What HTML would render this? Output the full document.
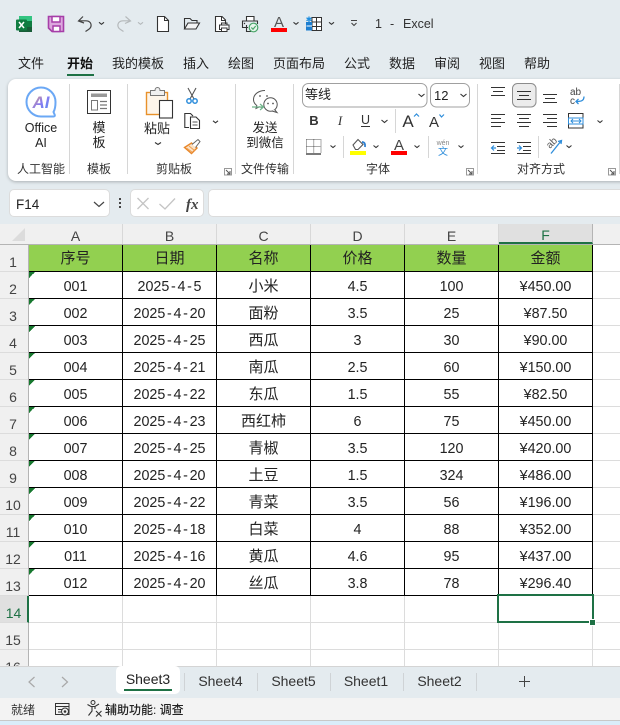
<!DOCTYPE html>
<html lang="zh-CN">
<head>
<meta charset="utf-8">
<title>1 - Excel</title>
<style>
html,body{margin:0;padding:0}
body{width:620px;height:725px;overflow:hidden;position:relative;background:#e4ebef;font-family:"Liberation Sans","Noto Sans CJK SC",sans-serif;color:#222}
#ribbon{position:absolute;left:8px;top:79px;width:640px;height:102px;background:#fff;border-radius:8px;box-shadow:0 1px 3px rgba(0,0,0,.25)}
.box{position:absolute;background:#fff;border:1px solid #dcdcdc;box-sizing:border-box;border-radius:5px}
#sheet{position:absolute;left:0;top:224px;width:620px;height:442px;background:#fff;overflow:hidden}
#colh{position:absolute;left:0;top:0;width:620px;height:21px;background:#f0f0f0;border-bottom:1px solid #b4b4b4;box-sizing:border-box}
.ch{position:absolute;top:0;height:20px;width:93px;border-right:1px solid #d8d8d8;text-align:center;font-size:14px;line-height:24px;color:#444}
#rowh{position:absolute;left:0;top:21px;width:29px;height:421px;background:#f0f0f0;border-right:1px solid #b4b4b4;box-sizing:border-box}
.rh{height:27px;box-sizing:border-box;border-bottom:1px solid #dcdcdc;text-align:center;font-size:14px;line-height:35px;color:#444;padding-right:2px}
.rh.s{background:#e0e0e0;color:#1e7145;border-right:2px solid #1e7145;padding-right:0;width:29px}
table{position:absolute;left:29px;top:21px;border-collapse:separate;border-spacing:0;table-layout:fixed;width:591px}
td{width:94px;height:27px;padding:4px 0 0;box-sizing:border-box;border-right:1px solid #000;border-bottom:1px solid #000;text-align:center;font-size:14.3px;line-height:22px;color:#222;white-space:nowrap}
td:nth-child(3){font-size:15px}
td.x{width:27px;border-right:0;border-bottom:1px solid #dcdcdc}
tr.h td{background:#92d050;font-size:15px;padding:2px 0 0;line-height:24px}
tr.h td.x{background:#fff}
tr.e td{border-right:1px solid #dcdcdc;border-bottom:1px solid #dcdcdc}
tr.e td.x{border-right:0}
td.t{background:linear-gradient(135deg,#17782f 50%,transparent 50%) 0 0/6px 6px no-repeat}
td i{font-style:normal;padding:0 1.7px}
#sel{position:absolute;left:497px;top:370px;width:97px;height:29px;box-sizing:border-box;border:2px solid #1e7145}
#hdl{position:absolute;left:589px;top:395px;background:#1e7145;border:1px solid #fff;width:5px;height:5px}
#tabs{position:absolute;left:0;top:666px;width:620px;height:32px;background:#e4ebef;border-top:1px solid #d4d4d4;box-sizing:border-box}
#tab3{position:absolute;left:116px;top:666px;width:64px;height:28px;background:#fff;border-radius:5px}
#status{position:absolute;left:0;top:698px;width:620px;height:23px;background:#f3f3f3;border-bottom:1px solid #c8c8c8;box-sizing:border-box}
#strip{position:absolute;left:0;top:721px;width:620px;height:4px;background:#d9edfa}
svg#o{position:absolute;left:0;top:0;width:620px;height:725px}
svg text{font-family:"Liberation Sans","Noto Sans CJK SC",sans-serif;fill:#222}
.m{text-anchor:middle}
.l{font-size:12px;fill:#333}
.r{font-size:12.5px;fill:#222}
.n{font-size:13px;fill:#222}
.tb{font-size:14px;fill:#333;text-anchor:middle}
</style>
</head>
<body>
<div id="ribbon"></div>
<div class="box" style="left:9px;top:189px;width:101px;height:28px"></div>
<div class="box" style="left:130px;top:189px;width:74px;height:28px"></div>
<div class="box" style="left:208px;top:189px;width:420px;height:28px;border-radius:5px 0 0 5px"></div>

<div id="sheet">
  <div id="colh">
    <div class="ch" style="left:29px">A</div>
    <div class="ch" style="left:123px">B</div>
    <div class="ch" style="left:217px">C</div>
    <div class="ch" style="left:311px">D</div>
    <div class="ch" style="left:405px">E</div>
    <div class="ch" style="left:499px;background:#e0e0e0;color:#1e7145;border-bottom:2px solid #1e7145;height:18px;line-height:22px;border-right:1px solid #b4b4b4">F</div>
  </div>
  <div id="rowh">
    <div class="rh">1</div><div class="rh">2</div><div class="rh">3</div><div class="rh">4</div><div class="rh">5</div><div class="rh">6</div><div class="rh">7</div><div class="rh">8</div><div class="rh">9</div><div class="rh">10</div><div class="rh">11</div><div class="rh">12</div><div class="rh">13</div><div class="rh s">14</div><div class="rh">15</div><div class="rh">16</div>
  </div>
  <table>
    <tr class="h"><td>序号</td><td>日期</td><td>名称</td><td>价格</td><td>数量</td><td>金额</td><td class="x"></td></tr>
    <tr><td class="t">001</td><td>2025<i>-</i>4<i>-</i>5</td><td>小米</td><td>4.5</td><td>100</td><td>¥450.00</td><td class="x"></td></tr>
    <tr><td class="t">002</td><td>2025<i>-</i>4<i>-</i>20</td><td>面粉</td><td>3.5</td><td>25</td><td>¥87.50</td><td class="x"></td></tr>
    <tr><td class="t">003</td><td>2025<i>-</i>4<i>-</i>25</td><td>西瓜</td><td>3</td><td>30</td><td>¥90.00</td><td class="x"></td></tr>
    <tr><td class="t">004</td><td>2025<i>-</i>4<i>-</i>21</td><td>南瓜</td><td>2.5</td><td>60</td><td>¥150.00</td><td class="x"></td></tr>
    <tr><td class="t">005</td><td>2025<i>-</i>4<i>-</i>22</td><td>东瓜</td><td>1.5</td><td>55</td><td>¥82.50</td><td class="x"></td></tr>
    <tr><td class="t">006</td><td>2025<i>-</i>4<i>-</i>23</td><td>西红柿</td><td>6</td><td>75</td><td>¥450.00</td><td class="x"></td></tr>
    <tr><td class="t">007</td><td>2025<i>-</i>4<i>-</i>25</td><td>青椒</td><td>3.5</td><td>120</td><td>¥420.00</td><td class="x"></td></tr>
    <tr><td class="t">008</td><td>2025<i>-</i>4<i>-</i>20</td><td>土豆</td><td>1.5</td><td>324</td><td>¥486.00</td><td class="x"></td></tr>
    <tr><td class="t">009</td><td>2025<i>-</i>4<i>-</i>22</td><td>青菜</td><td>3.5</td><td>56</td><td>¥196.00</td><td class="x"></td></tr>
    <tr><td class="t">010</td><td>2025<i>-</i>4<i>-</i>18</td><td>白菜</td><td>4</td><td>88</td><td>¥352.00</td><td class="x"></td></tr>
    <tr><td class="t">011</td><td>2025<i>-</i>4<i>-</i>16</td><td>黄瓜</td><td>4.6</td><td>95</td><td>¥437.00</td><td class="x"></td></tr>
    <tr><td class="t">012</td><td>2025<i>-</i>4<i>-</i>20</td><td>丝瓜</td><td>3.8</td><td>78</td><td>¥296.40</td><td class="x"></td></tr>
    <tr class="e"><td></td><td></td><td></td><td></td><td></td><td></td><td class="x"></td></tr>
    <tr class="e"><td></td><td></td><td></td><td></td><td></td><td></td><td class="x"></td></tr>
    <tr class="e"><td></td><td></td><td></td><td></td><td></td><td></td><td class="x"></td></tr>
  </table>
  <div id="sel"></div>
  <div id="hdl"></div>
</div>

<div id="tabs"></div>
<div id="tab3"></div>
<div id="status"></div>
<div id="strip"></div>

<svg id="o" viewBox="0 0 620 725" xmlns="http://www.w3.org/2000/svg" fill="none">
  <defs>
    <linearGradient id="ai" x1="0" y1="0" x2="1" y2="1">
      <stop offset="0" stop-color="#f0a860"/>
      <stop offset=".5" stop-color="#8a7cf0"/>
      <stop offset="1" stop-color="#4f8ff5"/>
    </linearGradient>
  </defs>
  <!-- title bar: excel logo -->
  <rect x="19" y="16" width="13" height="16" rx="1" fill="#21a366"/>
  <rect x="19" y="16" width="13" height="5" fill="#33c481"/>
  <rect x="25" y="21" width="7" height="6" fill="#107c41"/>
  <rect x="19" y="27" width="13" height="5" fill="#185c37"/>
  <rect x="16" y="19.5" width="11" height="11" rx="1" fill="#107c41"/>
  <path d="M19 22l5 6M24 22l-5 6" stroke="#fff" stroke-width="1.5"/>
  <!-- save -->
  <path d="M48.500 16.500H63.500V31.500H52L48.500 28Z" fill="#dca8de" stroke="#a63ea8" stroke-width="1.600"/>
  <rect x="52" y="16.500" width="8" height="5.500" fill="#fff" stroke="#a63ea8" stroke-width="1.500"/>
  <rect x="53" y="26" width="7" height="5.500" fill="#fff" stroke="#a63ea8" stroke-width="1.500"/>
  <!-- undo -->
  <path d="M83 16.500L78.500 21L84 23M79 20.800H86C92 21 92.500 27 88.500 29.500L85.500 31.500" stroke="#444" stroke-width="1.200"/>
  <path d="M99 22.300L101.500 24.300L104 22.300" stroke="#333" stroke-width="1.100"/>
  <!-- redo -->
  <path d="M125.500 16.500L130.500 21L125 23.500M130 20.800H123C117 21 116.500 27 120.500 29.500L123.500 31.500" stroke="#b5b9bb" stroke-width="1.200"/>
  <path d="M138 22.300L140.500 24.300L143 22.300" stroke="#b5b9bb" stroke-width="1.100"/>
  <!-- new -->
  <path d="M157.500 16.500H164.500L168.500 20.500V31.500H157.500Z" fill="#fff" stroke="#333" stroke-width="1.100"/>
  <path d="M164.500 16.500V20.500H168.500" stroke="#333" stroke-width="1"/>
  <!-- open -->
  <path d="M184.500 29V18.500H190L192 20.500H197V23" stroke="#333" stroke-width="1.100"/>
  <path d="M184.500 29H196L199.500 23H188Z" stroke="#333" stroke-width="1.100" fill="#f4f4f4"/>
  <!-- preview -->
  <path d="M221 31.500H215.500V16.500H222L225.500 20V24" stroke="#333" stroke-width="1.100" fill="#fff"/>
  <path d="M221.500 16.500V20.500H225.500" stroke="#333" stroke-width="1"/>
  <rect x="219.500" y="25" width="9.500" height="4.500" fill="#fff" stroke="#333"/>
  <rect x="221.500" y="23" width="5.500" height="2" stroke="#333"/>
  <rect x="221.500" y="28" width="5.500" height="3.500" fill="#fff" stroke="#333"/>
  <!-- quick print -->
  <path d="M246.500 21V16.500H254V21" stroke="#333" stroke-width="1.100" fill="#fff"/>
  <path d="M248 27.500H242.500V21H257.500V24" stroke="#333" stroke-width="1.100"/>
  <path d="M246.500 25V31.500H251" stroke="#333" stroke-width="1.100"/>
  <circle cx="244.500" cy="23.500" r=".7" fill="#333"/>
  <circle cx="253.500" cy="27.500" r="4.300" fill="#e8f5ec" stroke="#4aa66a" stroke-width="1.200"/>
  <path d="M251.300 27.500L253 29.200L255.700 26" stroke="#4aa66a" stroke-width="1.200"/>
  <!-- font colour -->
  <text x="279" y="27" class="m" style="font-size:15px;fill:#555">A</text>
  <rect x="271" y="28" width="16" height="4" fill="#f00"/>
  <path d="M293.500 22.300L296 24.300L298.500 22.300" stroke="#333" stroke-width="1.100"/>
  <!-- table icon -->
  <rect x="312" y="17.500" width="9.500" height="13" fill="#fff" stroke="#333"/>
  <path d="M312 22H321.500M312 26.500H321.500M316.500 17.500V30.500" stroke="#333"/>
  <rect x="306" y="22" width="6" height="8.500" fill="#1e7fd0"/>
  <path d="M306.500 26H312" stroke="#fff"/>
  <path d="M309 16.500V22M306.500 17.800L311.500 20.700M311.500 17.800L306.500 20.700" stroke="#1e8ee0" stroke-width="1.300"/>
  <path d="M329 22.300L331.500 24.300L334 22.300" stroke="#333" stroke-width="1.100"/>
  <!-- customise -->
  <path d="M351 20.500H357M351.500 23L354 25.500L356.500 23" stroke="#444" stroke-width="1.100"/>
  <text x="375" y="28" style="font-size:12.500px;fill:#333">1</text>
  <text x="390" y="28" style="font-size:12.500px;fill:#333">-</text>
  <text x="403" y="28" style="font-size:12.500px;fill:#333">Excel</text>

  <!-- menu -->
  <text x="18" y="68" class="n">文件</text>
  <text x="67" y="68" class="n" style="font-weight:700;fill:#111">开始</text>
  <text x="112" y="68" class="n">我的模板</text>
  <text x="183" y="68" class="n">插入</text>
  <text x="228" y="68" class="n">绘图</text>
  <text x="273" y="68" class="n">页面布局</text>
  <text x="344" y="68" class="n">公式</text>
  <text x="389" y="68" class="n">数据</text>
  <text x="434" y="68" class="n">审阅</text>
  <text x="479" y="68" class="n">视图</text>
  <text x="524" y="68" class="n">帮助</text>
  <rect x="67" y="74" width="27" height="2" fill="#1e7145"/>

  <!-- separators -->
  <g stroke="#d6d6d6">
    <path d="M69.500 84V174M127.500 84V174M235.500 84V174M293.500 84V174M477.500 84V174M619.500 84V174"/>
    <path d="M395.500 109V133M343.500 136V158M428.500 136V158M538.500 136V158"/>
  </g>

  <!-- group labels -->
  <text x="41" y="173" class="l m">人工智能</text>
  <text x="99" y="173" class="l m">模板</text>
  <text x="174" y="173" class="l m">剪贴板</text>
  <text x="265" y="173" class="l m">文件传输</text>
  <text x="378" y="173" class="l m">字体</text>
  <text x="541" y="173" class="l m">对齐方式</text>
  <g stroke="#555">
    <path d="M224.500 168.500H231.500V175H224.500Z" stroke="#999"/><path d="M226 170L230 174M230 171V174H227"/>
    <path d="M466.500 168.500H473.500V175H466.500Z" stroke="#999"/><path d="M468 170L472 174M472 171V174H469"/>
    <path d="M608.500 168.500H615.500V175H608.500Z" stroke="#999"/><path d="M610 170L614 174M614 171V174H611"/>
  </g>

  <!-- Office AI -->
  <path d="M41 87.500C33 87.500 26.500 94 26.500 102C26.500 110 33 116.500 41 116.500H53.500C54.500 116.500 55 116 54.800 115L53.500 112C55 109.500 55.500 105.500 55.500 102C55.500 94 49 87.500 41 87.500Z" fill="#fff" stroke="#6ba8f5" stroke-width="2"/>
  <text x="41" y="108" class="m" style="font-size:17px;font-weight:700;font-style:italic;fill:url(#ai)">AI</text>
  <text x="41" y="132" class="r m">Office</text>
  <text x="41" y="147" class="r m">AI</text>

  <!-- template -->
  <rect x="87.500" y="90.500" width="23" height="23" stroke="#333" fill="#fff"/>
  <rect x="91" y="93.500" width="16" height="3.500" fill="#999"/>
  <rect x="91.500" y="100.500" width="6" height="9.500" stroke="#777"/>
  <path d="M100 101.500H107M100 105H107M100 108.500H107" stroke="#777" stroke-width="1.200"/>
  <text x="99" y="132" class="r m" style="font-size:13px">模</text>
  <text x="99" y="147" class="r m" style="font-size:13px">板</text>

  <!-- paste -->
  <rect x="146.500" y="92.500" width="21" height="22" fill="#fdf5ea" stroke="#e8912a" stroke-width="1.400"/>
  <path d="M150.500 95.500V90.500H155C155 86.500 160 86.500 160 90.500H164.500V95.500Z" fill="#f0f0f0" stroke="#777"/>
  <rect x="159.500" y="100.500" width="13" height="17.500" fill="#fff" stroke="#333" stroke-width="1.100"/>
  <text x="157" y="133" class="r m" style="font-size:13px">粘贴</text>
  <path d="M155 142.500L158 144.500L161 142.500" stroke="#333" stroke-width="1.100"/>

  <!-- cut -->
  <path d="M188 88L194 99M196 88L190 99" stroke="#555" stroke-width="1.100"/>
  <circle cx="189" cy="101" r="2.200" fill="#fff" stroke="#2f8edb" stroke-width="1.500"/>
  <circle cx="195" cy="101" r="2.200" fill="#fff" stroke="#2f8edb" stroke-width="1.500"/>

  <!-- copy -->
  <path d="M189 127.500H184.800V113.500H190.500L193 116" stroke="#333" stroke-width="1.100"/>
  <path d="M190.500 117H196L199.500 120.500V128.500H190.500Z" stroke="#333" stroke-width="1.100" fill="#fff"/>
  <path d="M192.500 122H197.500M192.500 125H197.500" stroke="#555"/>
  <path d="M213 120.800L215.500 122.800L218 120.800" stroke="#333" stroke-width="1.100"/>

  <!-- format painter -->
  <path d="M184.500 147.500L191.500 143L197 148L191.500 153.500Z" fill="#fbe3c8" stroke="#e8872a" stroke-width="1.400"/>
  <path d="M186.500 148L192 152M189 146L194.500 150.500" stroke="#f0a050"/>
  <path d="M192 144.500L198 139.500L200 141.500L195.500 147.500" fill="#fff" stroke="#666"/>

  <!-- wechat -->
  <path d="M265 90.500C259 90.500 253.500 94 253.500 99.500C253.500 102 254.800 104 256.800 105.500L256 108.500L259.500 106.800L262 107.500" stroke="#555" fill="#fff"/>
  <circle cx="270.500" cy="104.500" r="6.700" fill="#fff" stroke="#555"/>
  <path d="M274.500 109.500L277 112.500L272 111" stroke="#555" fill="#fff"/>
  <circle cx="260" cy="96" r=".9" fill="#555"/><circle cx="267" cy="96" r=".9" fill="#555"/>
  <circle cx="268" cy="103.500" r=".9" fill="#555"/><circle cx="273" cy="103.500" r=".9" fill="#555"/>
  <path d="M252 107H263M260 104L263.500 107L260 110" stroke="#6fb58a" stroke-width="1.200"/>
  <text x="265" y="132" class="r m">发送</text>
  <text x="265" y="147" class="r m">到微信</text>

  <!-- font combos -->
  <rect x="302.500" y="83.500" width="124.500" height="23.500" rx="6" fill="#fff" stroke="#a0a0a0"/>
  <text x="305" y="99" class="n">等线</text>
  <path d="M418.500 94L421.500 96.500L424.500 94" stroke="#333" stroke-width="1.100"/>
  <rect x="430.500" y="83.500" width="39" height="23.500" rx="6" fill="#fff" stroke="#a0a0a0"/>
  <text x="434" y="100" class="n">12</text>
  <path d="M460.500 94L463.500 96.500L466.500 94" stroke="#333" stroke-width="1.100"/>

  <!-- B I U -->
  <text x="314" y="125" class="m" style="font-size:13px;font-weight:700;fill:#333">B</text>
  <text x="340" y="125" class="m" style="font-size:13px;font-style:italic;fill:#333;font-family:'Liberation Serif',serif">I</text>
  <text x="365.500" y="124" class="m" style="font-size:12.500px;fill:#333">U</text>
  <path d="M361 126.500H370" stroke="#333"/>
  <path d="M381.500 120L384.500 122.500L387.500 120" stroke="#333" stroke-width="1.100"/>
  <text x="408" y="127" class="m" style="font-size:17px;fill:#333">A</text>
  <path d="M414 116.500L416.500 114L419 116.500" stroke="#2f8edb" stroke-width="1.200"/>
  <text x="434" y="127" class="m" style="font-size:15px;fill:#333">A</text>
  <path d="M439.500 114.500L441.500 117L444 114.500" stroke="#2f8edb" stroke-width="1.200"/>

  <!-- row 3 font -->
  <path d="M306.500 139.500H321M306.500 139.500V153M321 139.500V153M306.500 146.500H321M313.700 139.500V153" stroke="#555" stroke-dasharray="1 1"/>
  <path d="M306 154H321" stroke="#222" stroke-width="1.200"/>
  <path d="M330.500 145.500L333 147.500L335.500 145.500" stroke="#333" stroke-width="1.100"/>
  <path d="M353 145L358 139.500L363 144.500L358 149.500H355.500Z" fill="#fff" stroke="#555" stroke-width="1.100"/>
  <path d="M362 142C364.500 142 365.500 144 365 147" stroke="#2f7fd0" stroke-width="1.800"/>
  <rect x="350" y="151" width="16" height="4" fill="#ffff00"/>
  <path d="M373.500 145.500L376 147.500L378.500 145.500" stroke="#333" stroke-width="1.100"/>
  <text x="399" y="150" class="m" style="font-size:15px;fill:#444">A</text>
  <rect x="391" y="151" width="16" height="4" fill="#f00"/>
  <path d="M414.500 145.500L417 147.500L419.500 145.500" stroke="#333" stroke-width="1.100"/>
  <text x="443" y="145" class="m" style="font-size:7px;fill:#888">wén</text>
  <text x="443" y="155" class="m" style="font-size:10px;fill:#2f8edb">文</text>
  <path d="M458.500 145.500L461 147.500L463.500 145.500" stroke="#333" stroke-width="1.100"/>

  <!-- align -->
  <rect x="512.500" y="83.500" width="23.500" height="23.500" rx="5" fill="#ececec" stroke="#8c8c8c"/>
  <g stroke="#333" stroke-width="1.100">
    <path d="M491 87.500H505M493 91.500H503M491 95.500H505"/>
    <path d="M517 91.500H531M519 95.500H529M517 99.500H531"/>
    <path d="M543 94.500H557M545 98.500H555M543 102.500H557"/>
    <path d="M491 114.500H505M491 118.500H501M491 122.500H505M491 126.500H501"/>
    <path d="M517 114.500H531M519 118.500H529M517 122.500H531M519 126.500H529"/>
    <path d="M543 114.500H557M547 118.500H557M543 122.500H557M547 126.500H557"/>
    <path d="M491 142.500H505M497 146.500H505M497 150.500H505M491 153.500H505"/>
    <path d="M517 142.500H531M523 146.500H531M523 150.500H531M517 153.500H531"/>
  </g>
  <path d="M496 148H491.500M494 145.500L491.500 148L494 150.500" stroke="#2f8edb" stroke-width="1.200"/>
  <path d="M517 148H521.500M519 145.500L521.500 148L519 150.500" stroke="#2f8edb" stroke-width="1.200"/>
  <text x="570" y="95" style="font-size:10px;fill:#444">ab</text>
  <text x="570" y="104" style="font-size:10px;fill:#444">c</text>
  <path d="M584 96.500C584 101 581 101.500 576 101.500M578.500 99L576 101.500L578.500 104" stroke="#2f8edb" stroke-width="1.300"/>
  <!-- merge -->
  <rect x="568.500" y="113.500" width="14.500" height="14.500" fill="#fff" stroke="#333"/>
  <rect x="568.500" y="118" width="14.500" height="6" fill="#fff" stroke="#2f8edb"/>
  <path d="M571 121H581M573 119L571 121L573 123M579 119L581 121L579 123" stroke="#2f8edb"/>
  <path d="M597.500 120.500L600 122.500L602.500 120.500" stroke="#333" stroke-width="1.100"/>
  <!-- orientation -->
  <path d="M551 153.500L561 141M558 141.500L561.500 140.500L561 144" stroke="#2f8edb" stroke-width="1.300"/>
  <text x="0" y="0" transform="translate(550,149) rotate(-45)" style="font-size:10px;fill:#555">ab</text>
  <path d="M566.500 145.500L569 147.500L571.500 145.500" stroke="#333" stroke-width="1.100"/>

  <!-- formula bar -->
  <text x="16" y="209" style="font-size:13.500px;fill:#222">F14</text>
  <path d="M94 202L99 206.500L104 202" stroke="#444" stroke-width="1.200"/>
  <g fill="#444"><rect x="119" y="198" width="2" height="2"/><rect x="119" y="202" width="2" height="2"/><rect x="119" y="206" width="2" height="2"/></g>
  <path d="M137.500 198L148.500 209M148.500 198L137.500 209" stroke="#c4c4c4" stroke-width="1.300"/>
  <path d="M159.500 204L165 209L175 198.500" stroke="#c4c4c4" stroke-width="1.300"/>
  <text x="186" y="209" style="font-family:'Liberation Serif',serif;font-style:italic;font-size:15px;font-weight:700;fill:#444">fx</text>

  <!-- corner -->
  <path d="M25 228V241H12Z" fill="#dcdcdc"/>

  <!-- tabs -->
  <path d="M34.500 677L29 682L34.500 687" stroke="#a8a8a8" stroke-width="1.200"/>
  <path d="M62 677L67.500 682L62 687" stroke="#a8a8a8" stroke-width="1.200"/>
  <text x="148" y="684" class="tb" style="fill:#222">Sheet3</text>
  <rect x="124" y="689" width="48" height="2" fill="#1e7145"/>
  <text x="220.500" y="686" class="tb">Sheet4</text>
  <text x="293.500" y="686" class="tb">Sheet5</text>
  <text x="366" y="686" class="tb">Sheet1</text>
  <text x="439.500" y="686" class="tb">Sheet2</text>
  <path d="M184.500 673V691M257.500 673V691M330.500 673V691M403.500 673V691M476.500 673V691" stroke="#cfd3d6"/>
  <path d="M524.500 676V687M519 681.500H530" stroke="#444"/>

  <!-- status bar -->
  <text x="11" y="714" class="l">就绪</text>
  <rect x="55.500" y="703.500" width="13.500" height="11" fill="#f3f3f3" stroke="#333"/>
  <path d="M55.500 706.500H69M58 709.500H62M58 712H61" stroke="#333"/>
  <circle cx="65" cy="711.500" r="3.500" fill="#f3f3f3" stroke="#333"/>
  <circle cx="65" cy="711.500" r="1.300" fill="#333"/>
  <circle cx="93" cy="702.500" r="2" stroke="#333"/>
  <path d="M87.500 704.500L91 706.500H95L99 704M92 706.500V711L88.500 715.500M95 706.500V709" stroke="#333" stroke-width="1.100"/>
  <path d="M96 711L101.500 716.500M101.500 711L96 716.500" stroke="#333" stroke-width="1.100"/>
  <text x="105" y="714" style="font-size:12px;fill:#222;font-weight:500">辅助功能: 调查</text>
</svg>
</body>
</html>
